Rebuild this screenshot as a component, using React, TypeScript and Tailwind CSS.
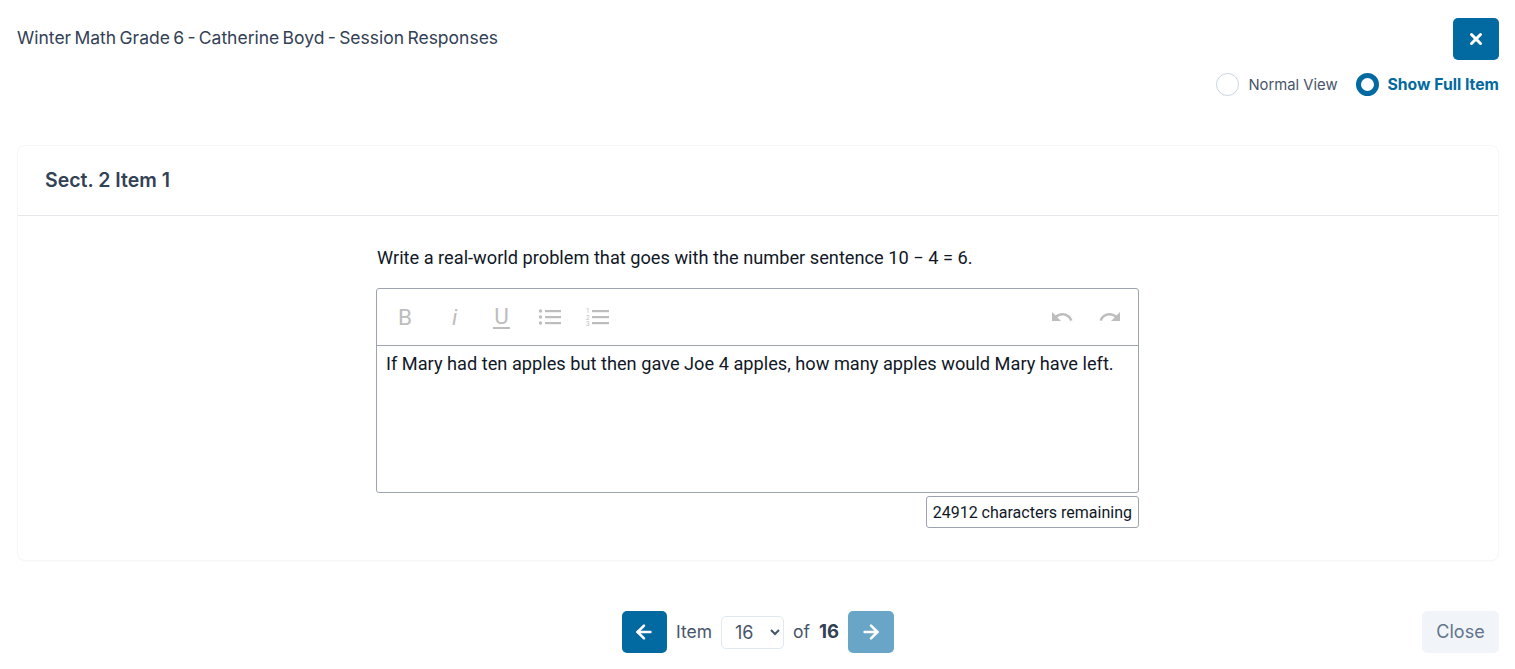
import { ArrowLeft, ArrowRight, X } from "lucide-react";

const inter = "font-['Inter',sans-serif]";

// Material style undo / redo
function HistoryIcon({ redo }: { redo?: boolean }) {
  return (
    <svg className="w-6 h-6 text-[#bdbdbd]" viewBox="0 0 24 24" fill="currentColor">
      {redo ? (
        <path d="M18.4 10.6C16.55 8.99 14.15 8 11.5 8c-4.65 0-8.58 3.03-9.96 7.22L3.9 16c1.05-3.19 4.05-5.5 7.6-5.5 1.95 0 3.73.72 5.12 1.88L13 16h9V7l-3.6 3.6z" />
      ) : (
        <path d="M12.5 8c-2.65 0-5.05.99-6.9 2.6L2 7v9h9l-3.62-3.62c1.39-1.16 3.16-1.88 5.12-1.88 3.54 0 6.55 2.31 7.6 5.5l2.37-.78C21.08 11.03 17.15 8 12.5 8z" />
      )}
    </svg>
  );
}

function BulletIcon() {
  return (
    <svg className="w-[24px] h-[24px] text-[#bdbdbd]" viewBox="0 0 24 24" fill="currentColor">
      <circle cx="2.5" cy="6" r="1.7" />
      <circle cx="2.5" cy="12" r="1.7" />
      <circle cx="2.5" cy="18" r="1.7" />
      <rect x="7" y="5" width="16" height="2.2" />
      <rect x="7" y="11" width="16" height="2.2" />
      <rect x="7" y="17" width="16" height="2.2" />
    </svg>
  );
}

function NumberedIcon() {
  return (
    <svg className="w-[24px] h-[24px] text-[#bdbdbd]" viewBox="0 0 24 24" fill="currentColor">
      <text x="0" y="8" fontSize="6.5" fontFamily="Roboto, sans-serif">1</text>
      <text x="0" y="14.5" fontSize="6.5" fontFamily="Roboto, sans-serif">2</text>
      <text x="0" y="21" fontSize="6.5" fontFamily="Roboto, sans-serif">3</text>
      <rect x="6" y="5" width="17" height="2.2" />
      <rect x="6" y="11" width="17" height="2.2" />
      <rect x="6" y="17" width="17" height="2.2" />
    </svg>
  );
}

export default function App() {
  return (
    <div className={`min-h-[669px] w-full bg-white pl-[17px] pr-4 pt-[18px] ${inter}`}>
      {/* Header */}
      <div className="flex items-start justify-between">
        <h1 className="mt-[8px] text-[17.5px] leading-[24px] font-normal text-[#334155] [word-spacing:-1.6px]">
          Winter Math Grade 6 - Catherine Boyd - Session Responses
        </h1>
        <button className="flex h-[42px] w-[46px] items-center justify-center rounded-[5px] bg-[#0369a1] text-white">
          <X size={18} strokeWidth={4} />
        </button>
      </div>

      {/* View toggle */}
      <div className="mt-[13px] flex items-center justify-end gap-[18px] text-[14.8px] leading-[20px]">
        <label className="flex items-center gap-[9px] text-[#475569]">
          <span className="h-[23px] w-[23px] rounded-full border border-[#cbd5e1] bg-white" />
          Normal View
        </label>
        <label className="flex items-center gap-[9px] text-[15.75px] font-bold text-[#0369a1]">
          <span className="h-[23px] w-[23px] rounded-full border-[5px] border-[#0369a1] bg-white" />
          Show Full Item
        </label>
      </div>

      {/* Item card */}
      <div className="mt-[49px] h-[416px] rounded-lg border border-[#f6f7f9] bg-white shadow-[0_1px_2px_rgba(0,0,0,0.02)]">
        <div className="flex h-[70px] items-center border-b border-[#e5e7eb] pl-[27px]">
          <h2 className="text-[19.5px] font-semibold text-[#334155]">Sect. 2 Item 1</h2>
        </div>
        <div className="ml-[358px] w-[763px] pt-[29px] font-['Roboto',sans-serif] text-[#111827]">
          <p className="pl-[1px] text-[18.22px] leading-[26px]">
            Write a real-world problem that goes with the number sentence 10 − 4 = 6.
          </p>
          <div className="mt-[17px] h-[205px] rounded-[3px] border border-[#9ca3af]">
            <div className="flex h-[57px] items-center justify-between border-b border-[#9ca3af] pl-[21px] pr-[16px]">
              <div className="flex items-center text-[#bdbdbd]">
                <span className="w-[51px] text-[22.5px] leading-none">B</span>
                <span className="w-[44px] pl-[3px] text-[22.5px] italic leading-none">i</span>
                <span className="w-[45px] text-[22.5px]">
                  <span className="mt-[1px] block w-[17px] border-b-2 border-[#bdbdbd] text-center leading-[21px]">U</span>
                </span>
                <span className="w-[48px]"><BulletIcon /></span>
                <NumberedIcon />
              </div>
              <div className="flex items-center gap-[24px]">
                <HistoryIcon />
                <HistoryIcon redo />
              </div>
            </div>
            <p className="px-[9px] pt-[5px] text-[18.22px] leading-[26px]">
              If Mary had ten apples but then gave Joe 4 apples, how many apples would Mary have left.
            </p>
          </div>
          <div className="mt-[3px] flex justify-end">
            <span className="flex h-[32px] items-center rounded-[3px] border border-[#9ca3af] px-[6px] pt-[1px] text-[16px]">
              24912 characters remaining
            </span>
          </div>
        </div>
      </div>

      {/* Footer */}
      <div className="mt-[50px] grid grid-cols-[1fr_auto_1fr] items-center">
        <div />
        <div className="flex items-center text-[17.5px] text-[#475569]">
          <button className="flex h-[42px] w-[45px] items-center justify-center rounded-[5px] bg-[#0369a1] text-white">
            <ArrowLeft size={22} strokeWidth={2.75} />
          </button>
          <span className="ml-[9px]">Item</span>
          <select
            defaultValue="16"
            className="ml-[9px] h-[33px] w-[63px] rounded-[5px] border border-[#e2e8f0] bg-white pl-[9px] text-[18px] text-[#475569]"
          >
            {Array.from({ length: 16 }, (_, i) => (
              <option key={i + 1} value={String(i + 1)}>{i + 1}</option>
            ))}
          </select>
          <span className="ml-[9px]">of</span>
          <span className="ml-[9px] text-[18.5px] font-bold text-[#334155]">16</span>
          <button className="ml-[9px] flex h-[42px] w-[46px] items-center justify-center rounded-[5px] bg-[#0369a1]/60 text-white">
            <ArrowRight size={22} strokeWidth={2.75} />
          </button>
        </div>
        <button className="h-[42px] w-[77px] justify-self-end rounded-[5px] bg-[#f1f5f9] pb-[1px] text-[18px] text-[#64748b]">
          Close
        </button>
      </div>
    </div>
  );
}
